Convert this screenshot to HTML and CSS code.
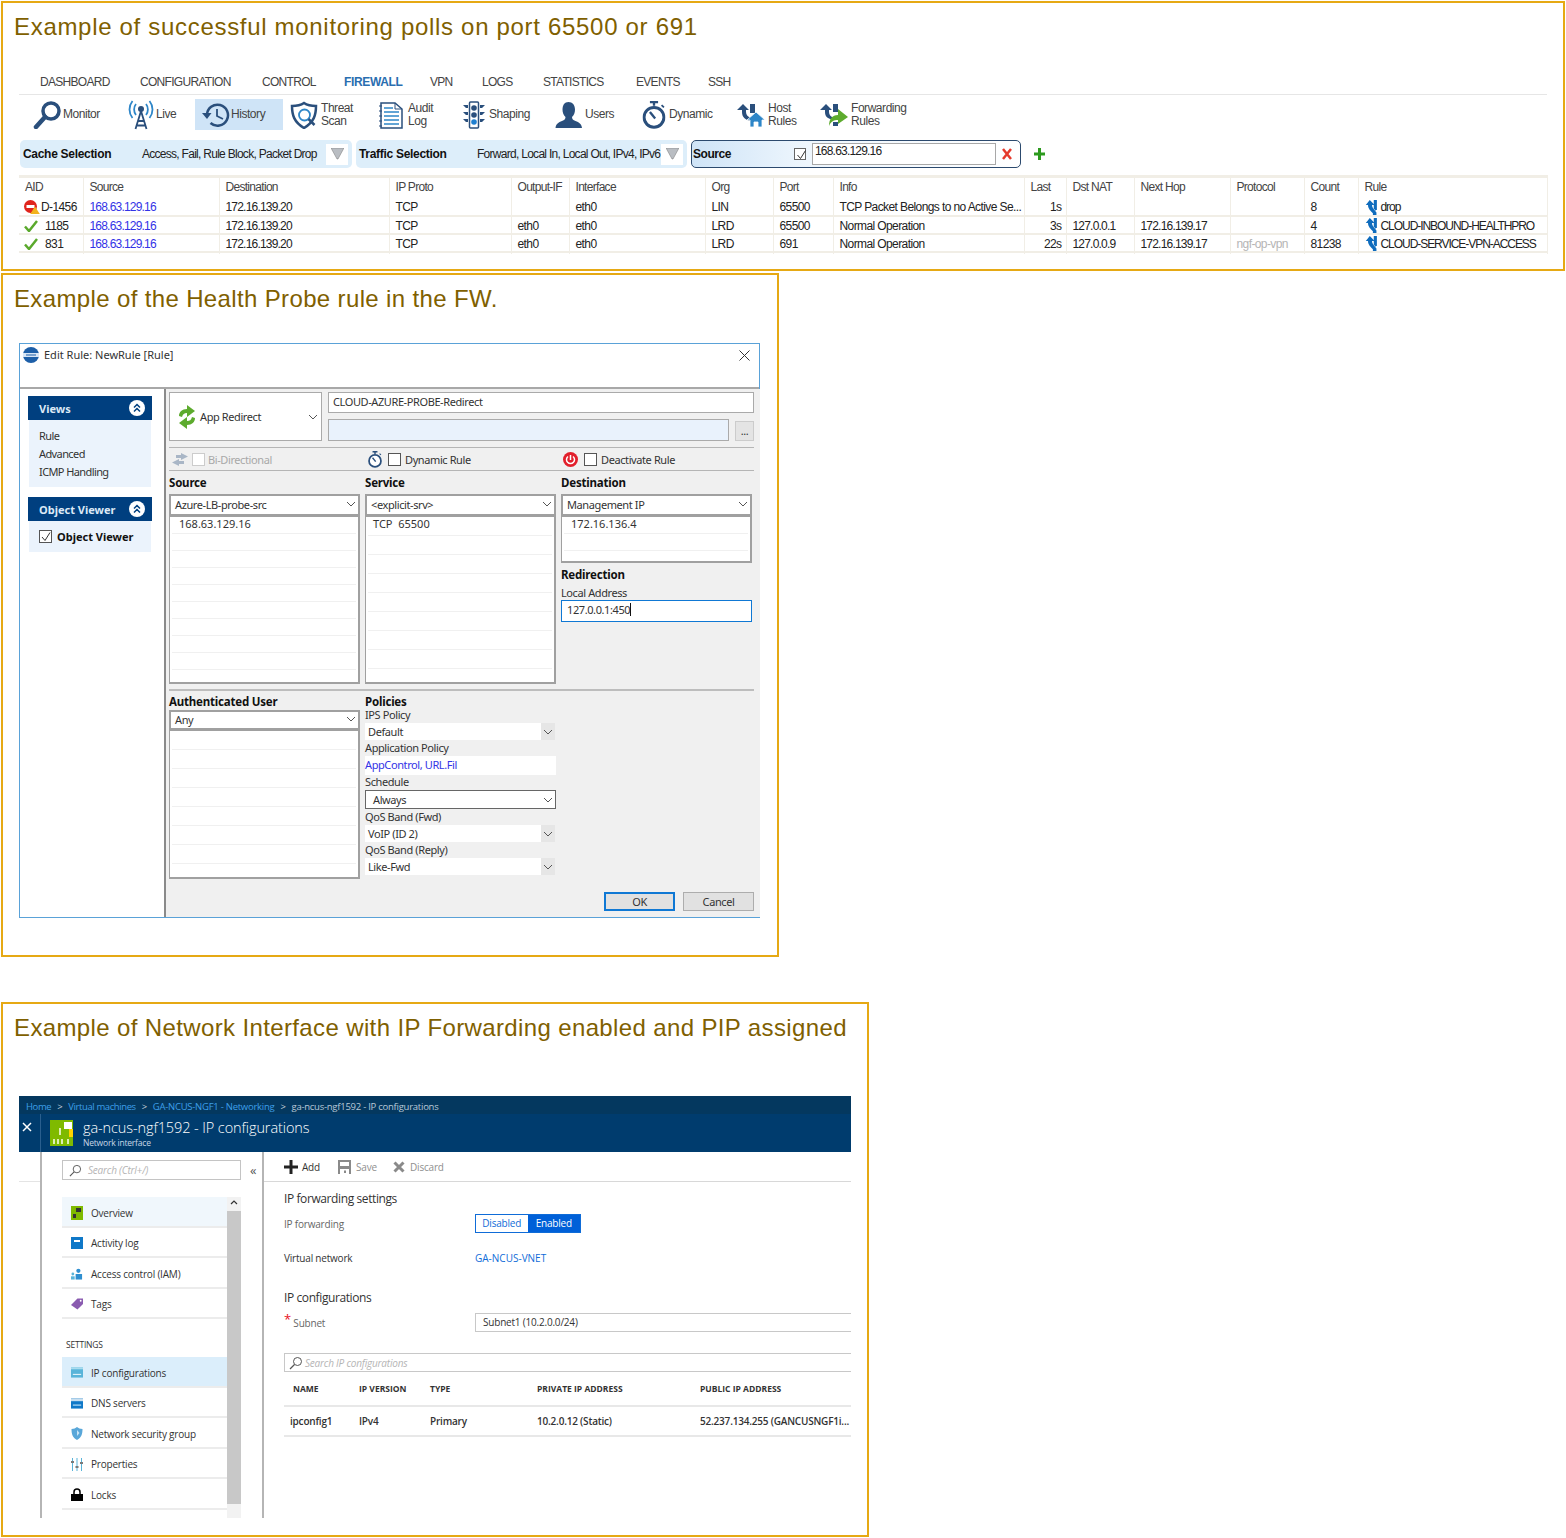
FILE: index.html
```html
<!DOCTYPE html>
<html>
  <head>
    <title>Monitoring examples</title>
    <link rel="stylesheet" href="styles.css">
  </head>
  <body>
    <svg class="defs" width="0" height="0">
      <symbol id="chev" viewBox="0 0 10 6"><path d="M1 1l4 4 4-4" fill="none" stroke="#555" stroke-width="1"/></symbol>
      <symbol id="branch" viewBox="0 0 14 18"><path d="M4.500 0L10 5.500H7C7 8 8.500 9.500 10 11.500L12 14v4H8v-3C6 12.500 2.500 10 2.500 5.500H0z" fill="#0f6cbd"/><path d="M9 0h3.500v10.500L11 12 9 9.500z" fill="#0f6cbd"/></symbol>
      <symbol id="check" viewBox="0 0 14 12"><path d="M1 6.500l4 4.500 8-10" fill="none" stroke="#5aa92c" stroke-width="2.500"/></symbol>
      <symbol id="watch" viewBox="0 0 20 24"><path d="M6.500 0h7v2h-2.500v2H9V2H6.500z" fill="#2a4f7c"/><path d="M16.500 3.500l2 2" stroke="#2a4f7c" stroke-width="1.500"/><circle cx="10" cy="14" r="8.500" fill="#fff" stroke="#2a4f7c" stroke-width="2.500"/><path d="M11 15L6.500 9.500" stroke="#2a4f7c" stroke-width="2"/></symbol>
      <symbol id="lens" viewBox="0 0 14 14"><circle cx="8.500" cy="5.500" r="4" fill="none" stroke="#555"/><path d="M5.500 8.500L1 13" stroke="#555" stroke-width="1.200"/></symbol>
      <symbol id="dbl" viewBox="0 0 16 16"><circle cx="8" cy="8" r="8" fill="#fff"/><path d="M5 7.500L8 4.500l3 3M5 11.500L8 8.500l3 3" fill="none" stroke="#003f7f" stroke-width="1.500"/></symbol>
      <symbol id="funnel" viewBox="0 0 13 12"><path d="M0 0h13L7 11H6z" fill="#b9bdc2" stroke="#777" stroke-width=".5"/></symbol>
    </svg>

    <section class="panel panel-fw">
      <h2>Example of successful monitoring polls on port 65500 or 691</h2>
      <div class="fw">
        <nav class="tabs">
          <span>DASHBOARD</span><span>CONFIGURATION</span><span>CONTROL</span><span class="tab-on">FIREWALL</span><span>VPN</span><span>LOGS</span><span>STATISTICS</span><span>EVENTS</span><span>SSH</span>
        </nav>
        <div class="tools">
          <div class="tool">
            <svg width="29" height="28" viewBox="0 0 29 28"><circle cx="18" cy="10" r="8" fill="#fff" stroke="#2a4f7c" stroke-width="3.500"/><path d="M12 16L3 26" stroke="#2a4f7c" stroke-width="4.500" stroke-linecap="round"/></svg>
            <span>Monitor</span>
          </div>
          <div class="tool">
            <svg width="28" height="30" viewBox="0 0 26 30"><g fill="none" stroke="#2e86c8" stroke-width="1.800"><path d="M8 4c-2.500 3-2.500 8 0 11M18 4c2.500 3 2.500 8 0 11M4.500 1c-4 5-4 12 0 17M21.500 1c4 5 4 12 0 17"/></g><g fill="none" stroke="#2a4f7c" stroke-width="1.800"><path d="M13 11L7.500 29M13 11l5.500 18M10 21h6M8.500 25.500h9"/></g><circle cx="13" cy="9" r="3" fill="#2a4f7c"/></svg>
            <span>Live</span>
          </div>
          <div class="tool tool-on">
            <svg width="28" height="26" viewBox="0 0 28 26"><path d="M5 13a10.500 10.500 0 1 1 3.500 8" fill="none" stroke="#2a4f7c" stroke-width="2.500"/><path d="M0 11h9.500L5 17z" fill="#2a4f7c"/><path d="M15 7v7l6 3" fill="none" stroke="#2a4f7c" stroke-width="1.800"/></svg>
            <span>History</span>
          </div>
          <div class="tool">
            <svg width="28" height="28" viewBox="0 0 28 28"><path d="M2 5c5 0 9-1 12-3 3 2 7 3 12 3 0 9-2 16-12 22C4 21 2 14 2 5z" fill="#fff" stroke="#2a4f7c" stroke-width="2.500"/><circle cx="14.500" cy="14" r="5.500" fill="#fff" stroke="#2e86c8" stroke-width="1.800"/><path d="M18.500 18l6 6" stroke="#2a4f7c" stroke-width="2.500"/></svg>
            <span class="two">Threat<br>Scan</span>
          </div>
          <div class="tool">
            <svg width="27" height="28" viewBox="0 0 27 28"><path d="M3 2h14l7 6v19H3z" fill="#fff" stroke="#2a4f7c" stroke-width="1.500"/><path d="M17 2v6h7" fill="none" stroke="#2a4f7c"/><path d="M6 7h9M6 11h15M6 15h15M6 19h15M6 23h15" stroke="#2e86c8" stroke-width="1.500"/><path d="M1 5h3M1 10h3M1 15h3M1 20h3M1 25h3" stroke="#2a4f7c"/></svg>
            <span class="two">Audit<br>Log</span>
          </div>
          <div class="tool">
            <svg width="28" height="28" viewBox="0 0 24 28"><rect x="7.500" y="1" width="9" height="26" rx="1" fill="#fff" stroke="#2a4f7c" stroke-width="1.500"/><circle cx="12" cy="7" r="2.800" fill="#2a4f7c"/><circle cx="12" cy="14" r="2.800" fill="#2a4f7c"/><circle cx="12" cy="21" r="2.800" fill="#1f7fd0"/><path d="M1 4h5v3H4zM1 11h5v3H4zM1 18h5v3H4zM18 4h5l-3 3h-2zM18 11h5l-3 3h-2zM18 18h5l-3 3h-2z" fill="#2a4f7c"/></svg>
            <span>Shaping</span>
          </div>
          <div class="tool">
            <svg width="31" height="26" viewBox="0 0 29 26"><path d="M14.500 0c4 0 6.500 3 6.500 7.500 0 3-1 5.500-3 7.500 0 2 1 3 3.500 4 3.500 1.500 6 2.500 6.500 7H1.500c.5-4.500 3-5.500 6.500-7 2.500-1 3.500-2 3.500-4-2-2-3-4.500-3-7.500C8.500 3 10.500 0 14.500 0z" fill="#2a4f7c"/></svg>
            <span>Users</span>
          </div>
          <div class="tool">
            <svg width="28" height="28" viewBox="0 0 20 24"><use href="#watch"/></svg>
            <span>Dynamic</span>
          </div>
          <div class="tool">
            <svg width="28" height="24" viewBox="0 0 28 24"><path d="M6 1l6 6H9v2c0 3 2 5 5 6v3c-6-1-9-4-9-9V7H0z" fill="#2a4f7c"/><path d="M13 1h5v9h-5z" fill="#2a4f7c"/><path d="M19 9l9 8h-3v7h-4v-5h-4v5h-4v-7h-3z" fill="#2e86c8" stroke="#fff" stroke-width=".8"/></svg>
            <span class="two">Host<br>Rules</span>
          </div>
          <div class="tool">
            <svg width="28" height="24" viewBox="0 0 28 24"><path d="M6 1l6 6H9v2c0 3 2 5 5 6v2c-6-1-9-3-9-8V7H0z" fill="#2a4f7c"/><path d="M13 1h5v8h-5zM13 19h5v4h-5z" fill="#2a4f7c"/><path d="M18 6l10 8-10 7v-4c-4 0-7 1-9 6 0-7 3-11 9-11z" fill="#5dab2e"/></svg>
            <span class="two">Forwarding<br>Rules</span>
          </div>
        </div>
        <div class="filters">
          <div class="filter">
            <b>Cache Selection</b>
            <span class="filter-val">Access, Fail, Rule Block, Packet Drop</span>
            <span class="funnel"><svg width="13" height="12"><use href="#funnel"/></svg></span>
          </div>
          <div class="filter filter-b">
            <b>Traffic Selection</b>
            <span class="filter-val">Forward, Local In, Local Out, IPv4, IPv6</span>
            <span class="funnel"><svg width="13" height="12"><use href="#funnel"/></svg></span>
          </div>
          <div class="filter-src">
            <b>Source</b>
            <span class="tick"><svg width="12" height="12" viewBox="0 0 12 12"><path d="M2.500 6l3 3.500 5-8" fill="none" stroke="#333"/></svg></span>
            <span class="src-input">168.63.129.16</span>
            <svg class="src-x" width="10" height="12" viewBox="0 0 10 12"><path d="M1 1l8 10M9 1L1 11" stroke="#e53a2c" stroke-width="2.500"/></svg>
          </div>
          <svg class="add-filter" width="11" height="12" viewBox="0 0 11 12"><path d="M4 0h3v4.500h4v3H7V12H4V7.500H0v-3h4z" fill="#2d9a1e"/></svg>
        </div>
        <table class="log">
          <colgroup><col class="c1"><col class="c2"><col class="c3"><col class="c4"><col class="c5"><col class="c6"><col class="c7"><col class="c8"><col class="c9"><col class="c10"><col class="c11"><col class="c12"><col class="c13"><col class="c14"><col class="c15"></colgroup>
          <thead>
            <tr><th>AID</th><th>Source</th><th>Destination</th><th>IP Proto</th><th>Output-IF</th><th>Interface</th><th>Org</th><th>Port</th><th>Info</th><th>Last</th><th>Dst NAT</th><th>Next Hop</th><th>Protocol</th><th>Count</th><th>Rule</th></tr>
          </thead>
          <tbody>
            <tr>
              <td class="aid"><svg width="16" height="14" viewBox="0 0 16 14"><circle cx="6.500" cy="6.500" r="6.500" fill="#e0241c"/><path d="M2.500 5h8v3h-8z" fill="#fff"/><path d="M11 6.500l4.800 7.500H6.200z" fill="#f2b21c"/></svg>D-1456</td>
              <td class="ip">168.63.129.16</td><td class="dig">172.16.139.20</td><td>TCP</td><td></td><td>eth0</td><td>LIN</td><td>65500</td><td>TCP Packet Belongs to no Active Se...</td><td class="num">1s</td><td></td><td></td><td></td><td>8</td>
              <td class="rule"><svg width="14" height="18"><use href="#branch"/></svg>drop</td>
            </tr>
            <tr>
              <td class="aid aid-ok"><svg width="14" height="12"><use href="#check"/></svg>1185</td>
              <td class="ip">168.63.129.16</td><td class="dig">172.16.139.20</td><td>TCP</td><td>eth0</td><td>eth0</td><td>LRD</td><td>65500</td><td>Normal Operation</td><td class="num">3s</td><td class="dig">127.0.0.1</td><td class="dig">172.16.139.17</td><td></td><td>4</td>
              <td class="rule"><svg width="14" height="18"><use href="#branch"/></svg>CLOUD-INBOUND-HEALTHPRO</td>
            </tr>
            <tr>
              <td class="aid aid-ok"><svg width="14" height="12"><use href="#check"/></svg>831</td>
              <td class="ip">168.63.129.16</td><td class="dig">172.16.139.20</td><td>TCP</td><td>eth0</td><td>eth0</td><td>LRD</td><td>691</td><td>Normal Operation</td><td class="num">22s</td><td class="dig">127.0.0.9</td><td class="dig">172.16.139.17</td><td class="muted">ngf-op-vpn</td><td>81238</td>
              <td class="rule"><svg width="14" height="18"><use href="#branch"/></svg>CLOUD-SERVICE-VPN-ACCESS</td>
            </tr>
            <tr class="log-end"><td></td><td></td><td></td><td></td><td></td><td></td><td></td><td></td><td></td><td></td><td></td><td></td><td></td><td></td><td></td></tr>
          </tbody>
        </table>
      </div>
    </section>

    <section class="panel panel-rule">
      <h2>Example of the Health Probe rule in the FW.</h2>
      <div class="dialog">
        <div class="dlg-title">
          <svg width="16" height="16" viewBox="0 0 16 16"><circle cx="8" cy="8" r="8" fill="#1d5fa8"/><path d="M0 6h16v4H0z" fill="#d8e6f5"/><path d="M3 7.500h10v1H3z" fill="#1d5fa8"/></svg>
          <span>Edit Rule: NewRule [Rule]</span>
          <svg class="dlg-close" width="11" height="11" viewBox="0 0 11 11"><path d="M.5.500l10 10M10.500.500l-10 10" stroke="#333"/></svg>
        </div>
        <div class="dlg-body">
          <aside class="dlg-side">
            <div class="side-head"><span>Views</span><svg width="16" height="16"><use href="#dbl"/></svg></div>
            <div class="side-body">
              <p>Rule</p>
              <p>Advanced</p>
              <p>ICMP Handling</p>
            </div>
            <div class="side-head side-gap"><span>Object Viewer</span><svg width="16" height="16"><use href="#dbl"/></svg></div>
            <div class="side-body side-ov">
              <span class="box box-on"><svg width="12" height="12" viewBox="0 0 12 12"><path d="M2 6l3 3.500 5-8" fill="none" stroke="#333"/></svg></span>
              <b>Object Viewer</b>
            </div>
          </aside>
          <div class="dlg-main">
            <div class="rule-top">
              <div class="action">
                <svg width="20" height="24" viewBox="0 0 20 24"><g fill="#5dab2e"><path d="M2 11c0-4 3-7 8-7V0l8 6-8 6V8c-3 0-4 1-5 4z"/><path d="M18 13c0 4-3 7-8 7v4l-8-6 8-6v4c3 0 4-1 5-4z"/></g></svg>
                <span>App Redirect</span>
                <svg class="sel-chev" width="10" height="6"><use href="#chev"/></svg>
              </div>
              <div class="rule-names">
                <div class="field">CLOUD-AZURE-PROBE-Redirect</div>
                <div class="desc-row"><div class="field field-blue"></div><div class="more">...</div></div>
              </div>
            </div>
            <div class="flags">
              <div class="flag flag-off">
                <svg width="18" height="13" viewBox="0 0 18 13"><path d="M10 0l7 3.500-7 3.500V5H5V2h5zM8 6v2h5v3H8v2L1 9.500z" fill="#a9b6c6"/></svg>
                <span class="box box-off"></span><span>Bi-Directional</span>
              </div>
              <div class="flag">
                <svg width="14" height="17" viewBox="0 0 20 24"><use href="#watch"/></svg>
                <span class="box"></span><span class="flag-text">Dynamic Rule</span>
              </div>
              <div class="flag">
                <svg width="15" height="15" viewBox="0 0 15 15"><circle cx="7.500" cy="7.500" r="7.500" fill="#e2202c"/><path d="M5 4.500a4 4 0 1 0 5 0M7.500 3v5" fill="none" stroke="#fff" stroke-width="1.500"/></svg>
                <span class="box"></span><span class="flag-text">Deactivate Rule</span>
              </div>
            </div>
            <div class="cols">
              <div>
                <h4>Source</h4>
                <div class="select">Azure-LB-probe-src<svg class="sel-chev" width="10" height="6"><use href="#chev"/></svg></div>
                <div class="list list-tall"><div class="li mono">168.63.129.16</div><div class="li"></div><div class="li"></div><div class="li"></div><div class="li"></div><div class="li"></div><div class="li"></div><div class="li"></div><div class="li"></div></div>
              </div>
              <div>
                <h4>Service</h4>
                <div class="select">&lt;explicit-srv&gt;<svg class="sel-chev" width="10" height="6"><use href="#chev"/></svg></div>
                <div class="list list-tall list-srv"><div class="li mono">TCP&nbsp; 65500</div><div class="li"></div><div class="li"></div><div class="li"></div><div class="li"></div><div class="li"></div><div class="li"></div><div class="li"></div></div>
              </div>
              <div>
                <h4>Destination</h4>
                <div class="select">Management IP<svg class="sel-chev" width="10" height="6"><use href="#chev"/></svg></div>
                <div class="list list-short"><div class="li mono">172.16.136.4</div><div class="li"></div><div class="li"></div></div>
                <h4 class="redir">Redirection</h4>
                <label class="small">Local Address</label>
                <div class="input-focus">127.0.0.1:450<i class="caret"></i></div>
              </div>
            </div>
            <div class="cols cols-low">
              <div>
                <h4>Authenticated User</h4>
                <div class="select select-low">Any<svg class="sel-chev" width="10" height="6"><use href="#chev"/></svg></div>
                <div class="list list-user"><div class="li"></div><div class="li"></div><div class="li"></div><div class="li"></div><div class="li"></div><div class="li"></div><div class="li"></div><div class="li"></div></div>
              </div>
              <div class="policies">
                <h4>Policies</h4>
                <label class="small">IPS Policy</label>
                <div class="pol-sel">Default<span class="pol-btn"><svg width="10" height="6"><use href="#chev"/></svg></span></div>
                <label class="small small-q">Application Policy</label>
                <div class="pol-link">AppControl, URL.Fil</div>
                <label class="small">Schedule</label>
                <div class="select select-sched">Always<svg class="sel-chev" width="10" height="6"><use href="#chev"/></svg></div>
                <label class="small small-q">QoS Band (Fwd)</label>
                <div class="pol-sel">VoIP (ID 2)<span class="pol-btn"><svg width="10" height="6"><use href="#chev"/></svg></span></div>
                <label class="small small-q">QoS Band (Reply)</label>
                <div class="pol-sel">Like-Fwd<span class="pol-btn"><svg width="10" height="6"><use href="#chev"/></svg></span></div>
              </div>
            </div>
            <div class="dlg-btns">
              <div class="btn btn-ok">OK</div>
              <div class="btn">Cancel</div>
            </div>
          </div>
        </div>
      </div>
    </section>

    <section class="panel panel-az">
      <h2>Example of Network Interface with IP Forwarding enabled and PIP assigned</h2>
      <div class="azure">
        <header class="az-head">
          <div class="crumbs">
            <a>Home</a><i>&gt;</i><a>Virtual machines</a><i>&gt;</i><a class="crumb-wide">GA-NCUS-NGF1 - Networking</a><i>&gt;</i><span class="crumb-wide">ga-ncus-ngf1592 - IP configurations</span>
          </div>
          <div class="az-title">
            <div class="az-x"><svg width="10" height="10" viewBox="0 0 10 10"><path d="M1 1l8 8M9 1L1 9" stroke="#fff" stroke-width="1.500"/></svg></div>
            <svg class="az-nic" width="23" height="26" viewBox="0 0 23 26"><path d="M0 0h23v26H0z" fill="#7fba00"/><path d="M14 2h8v7h-8z" fill="#fff"/><path d="M3 19h2v5H3zM7 19h2v5H7zM11 19h2v5h-2zM17 19h2v5h-2z" fill="#dfeeb5"/><path d="M9 8h2v7H9z" fill="#dfeeb5"/><path d="M19 9h4v8h-4z" fill="#ffd400"/></svg>
            <div>
              <div class="az-name">ga-ncus-ngf1592 - IP configurations</div>
              <div class="az-sub">Network interface</div>
            </div>
          </div>
        </header>
        <div class="az-body">
          <div class="az-gutter"><div class="gutter-top"></div></div>
          <div class="az-menu">
            <div class="menu-top">
              <div class="az-search"><svg width="13" height="13"><use href="#lens"/></svg><em>Search (Ctrl+/)</em></div>
              <span class="fold">&laquo;</span>
            </div>
            <div class="menu-wrap">
              <ul class="menu">
                <li class="menu-soft"><svg width="12" height="14" viewBox="0 0 12 14"><path d="M0 0h12v14H0z" fill="#7fba00"/><path d="M5 2h5v4H5zM2 8h3v4H2z" fill="#333"/></svg>Overview</li>
                <li><svg width="12" height="12" viewBox="0 0 12 12"><path d="M0 0h12v12H0z" fill="#0f78c8"/><path d="M3 3h6v2H3z" fill="#fff"/></svg>Activity log</li>
                <li><svg width="13" height="12" viewBox="0 0 13 12"><circle cx="8" cy="2.500" r="2.300" fill="#2f8fd0"/><path d="M5 6h7v6H5z" fill="#2f8fd0"/><circle cx="2" cy="6" r="1.500" fill="#59b4d9"/><path d="M0 8.500h4V12H0z" fill="#59b4d9"/></svg>Access control (IAM)</li>
                <li><svg width="13" height="12" viewBox="0 0 13 12"><path d="M7 0h6v6l-6 6-7-5z" fill="#8a5bb0"/><circle cx="10.500" cy="2.500" r="1" fill="#fff"/></svg>Tags</li>
                <li class="menu-label">SETTINGS</li>
                <li class="menu-on"><svg width="13" height="11" viewBox="0 0 13 11"><path d="M0 0h13v11H0z" fill="#59b4d9"/><path d="M0 0h13v2H0z" fill="#a8dcef"/><path d="M2 7h9v1H2z" fill="#fff"/></svg>IP configurations</li>
                <li><svg width="13" height="11" viewBox="0 0 13 11"><path d="M0 0h13v11H0z" fill="#0f78c8"/><path d="M0 0h13v3H0z" fill="#c8dff0"/><path d="M2 6.500h9v1.500H2z" fill="#9fd0f2"/></svg>DNS servers</li>
                <li><svg width="11" height="13" viewBox="0 0 11 13"><path d="M0 2c2.500 0 4-1 5.500-2C7 1 8.500 2 11 2c0 5-1 8.500-5.500 11C1 10.500 0 7 0 2z" fill="#59a7d9"/><path d="M5.500 3L8 6 5.500 9z" fill="#c8e4f5"/></svg>Network security group</li>
                <li><svg width="12" height="13" viewBox="0 0 12 13"><path d="M1 0h1v13H1zM5.500 0h1v13h-1zM10 0h1v13h-1z" fill="#59b4d9"/><path d="M0 3h3v2H0zM4.500 8h3v2h-3zM9 4h3v2H9z" fill="#7a7a7a"/></svg>Properties</li>
                <li><svg width="12" height="13" viewBox="0 0 12 13"><path d="M3 6V4a3 3 0 0 1 6 0v2" fill="none" stroke="#000" stroke-width="1.500"/><path d="M0 6h12v7H0z" fill="#000"/></svg>Locks</li>
              </ul>
              <div class="scroll"><span class="scroll-up"><svg width="8" height="5" viewBox="0 0 8 5"><path d="M1 4l3-3 3 3" fill="none" stroke="#333" stroke-width="1.200"/></svg></span><span class="scroll-thumb"></span></div>
            </div>
          </div>
          <div class="az-blade">
            <div class="blade-bar">
              <span class="bar-act"><svg width="14" height="14" viewBox="0 0 14 14"><path d="M5.500 0h3v5.500H14v3H8.500V14h-3V8.500H0v-3h5.500z" fill="#222"/></svg>Add</span>
              <span class="bar-act bar-off"><svg width="13" height="14" viewBox="0 0 13 14"><path d="M0 0h13v14H0z" fill="#8a8a8a"/><path d="M2 2h9v4H2zM2 9h9v5H2z" fill="#fff"/><path d="M6 10.500h2V13H6z" fill="#8a8a8a"/></svg>Save</span>
              <span class="bar-act bar-off"><svg width="12" height="12" viewBox="0 0 12 12"><path d="M1.500 1.500l9 9M10.500 1.500l-9 9" stroke="#8a8a8a" stroke-width="3"/></svg>Discard</span>
            </div>
            <div class="blade-body">
              <h5 class="blade-h">IP forwarding settings</h5>
              <div class="form-row form-first">
                <label>IP forwarding</label>
                <div class="toggle"><span>Disabled</span><span class="toggle-on">Enabled</span></div>
              </div>
              <div class="form-row form-vnet">
                <label class="label-dark">Virtual network</label>
                <a class="az-link">GA-NCUS-VNET</a>
              </div>
              <h5 class="blade-h blade-h2">IP configurations</h5>
              <div class="form-row form-subnet">
                <label><i class="req">*</i> Subnet</label>
                <div class="az-input">Subnet1 (10.2.0.0/24)</div>
              </div>
              <div class="az-filter"><svg width="14" height="14"><use href="#lens"/></svg><em>Search IP configurations</em></div>
              <table class="ipconf">
                <colgroup><col class="k1"><col class="k2"><col class="k3"><col class="k4"><col class="k5"></colgroup>
                <thead><tr><th>NAME</th><th>IP VERSION</th><th>TYPE</th><th>PRIVATE IP ADDRESS</th><th>PUBLIC IP ADDRESS</th></tr></thead>
                <tbody><tr><td>ipconfig1</td><td>IPv4</td><td>Primary</td><td>10.2.0.12 (Static)</td><td>52.237.134.255 (GANCUSNGF1i...</td></tr></tbody>
              </table>
            </div>
          </div>
        </div>
      </div>
    </section>
  </body>
</html>
```

FILE: styles.css
```css
* {
  box-sizing: border-box;
}
body {
  margin: 0;
  padding: 1px;
  background: #fff;
  font-family: "Liberation Sans", sans-serif;
  color: #222;
}
.defs {
  display: block;
  height: 0;
}
p, h2, h4, h5, ul {
  margin: 0;
  padding: 0;
}
.panel {
  border: 2px solid #e6a914;
  overflow: hidden;
}
.panel-fw {
  width: 1564px;
  height: 270px;
}
.panel-rule {
  width: 778px;
  height: 684px;
  margin-top: 2px;
}
.panel-az {
  width: 868px;
  height: 535px;
  margin-top: 45px;
}
h2 {
  margin: 9px 0 0 11px;
  height: 30px;
  line-height: 30px;
  font-size: 24px;
  font-weight: 400;
  color: #7f6000;
  letter-spacing: 0.69px;
  white-space: nowrap;
}
.panel-rule h2 {
  letter-spacing: 0.36px;
}
.panel-az h2 {
  letter-spacing: 0.37px;
}

/* firewall monitor */
.fw {
  margin: 28px 0 0 16px;
  width: 1528px;
  font-size: 12px;
  letter-spacing: -0.45px;
}
.tabs {
  display: grid;
  grid-template-columns: 100px 122px 82px 86px 52px 61px 93px 72px auto;
  height: 25px;
  padding: 6px 0 0 21px;
  border-bottom: 1px solid #e6e6e6;
  color: #444;
  line-height: 13px;
  letter-spacing: -0.7px;
}
.tab-on {
  color: #2a6eb0;
  font-weight: 700;
  letter-spacing: -0.35px;
}
.tools {
  display: grid;
  grid-template-columns: 94px 68px 95px 88px 82px 93px 87px 97px 83px auto;
  height: 31px;
  margin-top: 4px;
  padding-left: 14px;
}
.tool {
  display: flex;
  align-items: center;
  gap: 1px;
  color: #444;
  line-height: 13px;
}
.tool svg {
  flex: none;
}
.tool-on {
  background: #cfe4f7;
  margin-right: 7px;
  padding-left: 7px;
}
.two {
  margin-left: 2px;
}
.filters {
  display: flex;
  align-items: center;
  height: 28px;
  margin: 10px 0 0 1px;
  gap: 4px;
}
.filter {
  position: relative;
  display: flex;
  align-items: center;
  width: 332px;
  height: 28px;
  padding-left: 3px;
  background: #ddeefa;
  border-radius: 5px;
}
.filter-b {
  width: 331px;
}
.filter b {
  width: 119px;
  letter-spacing: -0.3px;
  color: #111;
}
.filter-b b {
  width: 118px;
}
.filter-val {
  white-space: nowrap;
  letter-spacing: -0.72px;
}
.funnel {
  position: absolute;
  right: 4px;
  top: 4px;
  width: 22px;
  height: 21px;
  padding-top: 4px;
  background: #fff;
  text-align: center;
  line-height: 0;
}
.filter-src {
  display: flex;
  align-items: center;
  flex: none;
  width: 330px;
  height: 28px;
  padding-left: 1px;
  border: 1px solid #2c4a6e;
  border-radius: 5px;
  background: linear-gradient(90deg, #cfe4f7, #eef6fd 35%, #fff);
}
.filter-src b {
  width: 101px;
  color: #111;
}
.tick {
  width: 12px;
  height: 12px;
  border: 1px solid #666;
  background: #fff;
  display: block;
  line-height: 0;
}
.src-input {
  width: 184px;
  height: 22px;
  margin-left: 6px;
  padding: 1px 2px;
  background: #fff;
  border: 1px solid #a8a8a8;
  line-height: 13px;
  letter-spacing: -0.8px;
}
.src-x {
  margin-left: 6px;
}
.add-filter {
  margin-left: 9px;
}
.log {
  width: 100%;
  margin-top: 7px;
  table-layout: fixed;
  border-collapse: collapse;
  border-top: 3px solid #f1eee6;
  white-space: nowrap;
}
.c1 { width: 64px; }
.c2 { width: 136px; }
.c3 { width: 170px; }
.c4 { width: 122px; }
.c5 { width: 58px; }
.c6 { width: 136px; }
.c7 { width: 68px; }
.c8 { width: 60px; }
.c9 { width: 191px; }
.c10 { width: 42px; }
.c11 { width: 68px; }
.c12 { width: 96px; }
.c13 { width: 74px; }
.c14 { width: 54px; }
.c15 { width: 189px; }
.log th {
  height: 21px;
  padding: 0 0 2px 6px;
  font-weight: 400;
  text-align: left;
  color: #444;
  border-right: 1px solid #f1eee6;
  letter-spacing: -0.7px;
}
.log td {
  height: 18px;
  padding: 2px 0 0 6px;
  border-right: 1px solid #f1eee6;
  border-bottom: 2px solid #f1eee6;
  overflow: hidden;
  line-height: 14px;
  letter-spacing: -0.6px;
}
.log tbody tr:nth-child(2) td {
  height: 17px;
}
.log td.ip, .log td.dig {
  letter-spacing: -0.8px;
}
.log td.ip {
  color: #3333e6;
}
.log td.num {
  text-align: right;
  padding-right: 4px;
}
.log td.muted {
  color: #b5b5b5;
}
.log td.aid {
  padding-left: 5px;
}
.aid svg {
  margin-right: 1px;
  vertical-align: -3px;
}
.log td.aid-ok svg {
  margin-right: 7px;
  vertical-align: -2px;
}
.log td.rule svg {
  width: 14px;
  height: 16px;
  margin: -3px 2px -3px 0;
  vertical-align: middle;
}
.log td.rule {
  letter-spacing: -1.05px;
}
.log .log-end td {
  height: 2px;
  padding: 0;
  line-height: 0;
  border-bottom: 0;
}

/* edit rule dialog */
.dialog {
  width: 741px;
  height: 575px;
  margin: 29px 0 0 16px;
  border: 1px solid #5aa2d8;
  background: #fff;
  font-family: "Noto Sans", sans-serif;
  font-size: 11px;
  letter-spacing: -0.4px;
  color: #333;
}
.dlg-title {
  display: flex;
  gap: 5px;
  height: 45px;
  padding: 3px 9px 0 3px;
  border-bottom: 2px solid #a8a8a8;
  line-height: 16px;
  letter-spacing: 0;
}
.dlg-close {
  margin: 3px 0 0 auto;
}
.dlg-body {
  display: flex;
  height: 528px;
}
.dlg-side {
  flex: none;
  width: 146px;
  padding: 7px 0 0 8px;
  border-right: 2px solid #8a8a8a;
}
.side-head {
  display: flex;
  justify-content: space-between;
  align-items: center;
  width: 124px;
  height: 24px;
  padding: 0 7px 0 11px;
  background: #003f7f;
  color: #dce9f6;
  font-weight: 700;
  letter-spacing: 0;
}
.side-gap {
  margin-top: 10px;
}
.side-body {
  width: 122px;
  height: 67px;
  margin-left: 1px;
  padding: 7px 0 0 10px;
  background: #ebf3fc;
  line-height: 18px;
  letter-spacing: -0.6px;
}
.side-ov {
  display: flex;
  align-items: center;
  gap: 5px;
  height: 31px;
  padding: 0 0 0 10px;
  color: #111;
  letter-spacing: 0;
}
.box {
  display: block;
  flex: none;
  width: 13px;
  height: 13px;
  border: 1px solid #555;
  background: #fff;
  line-height: 0;
}
.box-off {
  border-color: #ccc;
}
.dlg-main {
  flex: 1;
  padding: 3px 6px 0 3px;
  background: #f0f0f0;
}
.rule-top {
  display: grid;
  grid-template-columns: 153px 1fr;
  gap: 6px;
  height: 49px;
}
.action {
  display: flex;
  align-items: center;
  gap: 3px;
  padding: 0 3px 0 7px;
  background: #fff;
  border: 1px solid #aaa;
}
.sel-chev {
  margin-left: auto;
  flex: none;
}
.rule-names {
  display: flex;
  flex-direction: column;
  gap: 6px;
}
.field {
  height: 21px;
  padding: 0 4px;
  background: #fff;
  border: 1px solid #aaa;
  line-height: 18px;
}
.desc-row {
  display: flex;
  gap: 6px;
  height: 22px;
}
.field-blue {
  width: 401px;
  height: 22px;
  background: #e9f2fc;
}
.more {
  width: 19px;
  height: 20px;
  margin-top: 2px;
  border: 1px solid #ccc;
  background: #e4e4e4;
  text-align: center;
  line-height: 18px;
}
.flags {
  display: grid;
  grid-template-columns: 196px 195px 1fr;
  height: 24px;
  margin-top: 6px;
  border-top: 1px solid #b5b5b5;
  border-bottom: 1px solid #b5b5b5;
}
.flag {
  display: flex;
  align-items: center;
  gap: 6px;
  padding-left: 3px;
}
.flag-text {
  margin-left: -2px;
}
.flag-off {
  gap: 3px;
  padding-left: 2px;
  color: #a8a8a8;
}
.cols {
  display: grid;
  grid-template-columns: 191px 191px 191px;
  gap: 5px;
  margin-top: 5px;
}
h4 {
  height: 18px;
  font-size: 11.500px;
  line-height: 13px;
  color: #111;
  letter-spacing: -0.2px;
}
.select {
  display: flex;
  align-items: center;
  height: 21px;
  padding: 0 2px 2px 4px;
  background: #fff;
  border: 2px solid #a0a0a0;
  border-bottom-width: 1px;
}
.list {
  background: #fff;
  border: 1px solid #a0a0a0;
  border-width: 2px 2px 2px 1px;
  overflow: hidden;
}
.list-tall {
  height: 169px;
}
.list-short {
  height: 48px;
}
.li {
  height: 17px;
  margin: 0 2px;
  padding-left: 7px;
  border-bottom: 1px solid #f0f0f0;
  line-height: 14px;
}
.list-srv .li {
  height: 19px;
  padding-left: 5px;
}
.mono {
  letter-spacing: 0;
}
.redir {
  height: 16px;
  margin-top: 5px;
}
.small {
  display: block;
  height: 16px;
  line-height: 17px;
}
.input-focus {
  height: 22px;
  padding-left: 5px;
  background: #fff;
  border: 1px solid #0f78d4;
  line-height: 18px;
}
.caret {
  display: inline-block;
  width: 1px;
  height: 13px;
  background: #111;
  vertical-align: -2px;
}
.cols-low {
  height: 190px;
  margin-top: 5px;
  padding-top: 1px;
  border-top: 2px solid #bdbdbd;
  grid-template-columns: 191px 191px;
}
.cols-low h4 {
  line-height: 19px;
}
.select-low {
  height: 19px;
}
.list-user {
  height: 150px;
}
.list-user .li {
  height: 19px;
}
.policies h4 {
  height: 16px;
}
.policies .small {
  height: 15px;
  line-height: 14px;
}
.policies .small-q {
  height: 16px;
  line-height: 15px;
}
.pol-sel {
  display: flex;
  align-items: center;
  justify-content: space-between;
  width: 190px;
  height: 17px;
  padding-left: 3px;
  background: #fff;
}
.pol-btn {
  display: flex;
  align-items: center;
  justify-content: center;
  width: 14px;
  height: 17px;
  background: #e6e6e6;
}
.pol-link {
  height: 19px;
  color: #3333e6;
  background: #fff;
  line-height: 18px;
}
.select-sched {
  height: 19px;
  padding: 0 2px 0 7px;
  border-width: 1px;
  border-color: #666;
}
.dlg-btns {
  display: flex;
  justify-content: flex-end;
  gap: 8px;
  margin-top: 13px;
}
.btn {
  width: 71px;
  height: 19px;
  background: #e1e1e1;
  border: 1px solid #adadad;
  text-align: center;
  line-height: 17px;
}
.btn-ok {
  border: 2px solid #0f78d4;
  line-height: 15px;
}

/* azure blade */
.azure {
  width: 832px;
  height: 422px;
  margin: 53px 0 0 16px;
  font-family: "Open Sans", sans-serif;
  font-size: 10px;
  letter-spacing: -0.2px;
  color: #333;
}
.az-head {
  height: 56px;
  background: #003c6e;
  color: #fff;
}
.crumbs {
  display: flex;
  gap: 6px;
  height: 18px;
  padding-left: 7px;
  background: #04385f;
  color: #b8c8d8;
  font-size: 9.500px;
  line-height: 21px;
  letter-spacing: -0.4px;
}
.crumbs a {
  color: #3d9fe8;
}
.crumbs .crumb-wide {
  letter-spacing: -0.25px;
}
.crumbs i {
  font-style: normal;
  color: #c8d4de;
}
.az-title {
  display: flex;
  height: 38px;
}
.az-x {
  width: 22px;
  padding: 8px 0 0 3px;
  border-right: 1px solid #2a5f8e;
  line-height: 0;
}
.az-nic {
  margin: 6px 10px 0 9px;
}
.az-name {
  margin-top: 5px;
  height: 18px;
  font-size: 14.500px;
  font-weight: 300;
  line-height: 18px;
  letter-spacing: -0.1px;
  white-space: nowrap;
}
.az-sub {
  font-size: 8.500px;
  line-height: 12px;
  color: #c8d8e6;
}
.az-body {
  display: flex;
  height: 366px;
}
.az-gutter {
  width: 23px;
  border-right: 2px solid #b5b5b5;
}
.gutter-top {
  height: 30px;
  border-bottom: 1px solid #e4e4e4;
}
.az-menu {
  width: 222px;
  padding-left: 20px;
  border-right: 2px solid #b5b5b5;
}
.menu-top {
  display: flex;
  align-items: center;
  margin-top: 8px;
}
.az-search {
  display: flex;
  align-items: center;
  gap: 6px;
  width: 179px;
  height: 20px;
  padding-left: 6px;
  border: 1px solid #c4c4c4;
}
em {
  color: #b5b5b5;
  white-space: nowrap;
}
.fold {
  margin-left: 9px;
  font-size: 13px;
  color: #555;
}
.menu-wrap {
  display: flex;
  height: 321px;
  margin-top: 17px;
}
.menu {
  width: 165px;
  list-style: none;
}
.menu li {
  display: flex;
  align-items: center;
  height: 30.500px;
  padding: 3px 0 0 9px;
  border-bottom: 2px solid #ececec;
}
.menu li svg {
  flex: none;
  width: 12px;
  margin-right: 8px;
}
.menu li.menu-label {
  height: 38px;
  padding: 12px 0 0 4px;
  border: 0;
  font-size: 8.500px;
}
.menu-soft {
  background: #f0f7fc;
}
.menu-on {
  background: #dbeefb;
}
.scroll {
  display: flex;
  flex-direction: column;
  width: 14px;
  background: #f2f2f2;
}
.scroll-up {
  display: block;
  height: 14px;
  padding: 3px 0 0 3px;
  line-height: 0;
}
.scroll-thumb {
  display: block;
  height: 293px;
  background: #c8c8c8;
}
.az-blade {
  flex: 1;
}
.blade-bar {
  display: flex;
  height: 30px;
  padding-left: 20px;
  border-bottom: 1px solid #d8d8d8;
}
.bar-act {
  display: flex;
  align-items: center;
  width: 54px;
  gap: 4px;
  color: #333;
}
.bar-act + .bar-act {
  width: 55px;
  gap: 5px;
}
.bar-off {
  color: #8f8f8f;
}
.blade-body {
  padding-left: 20px;
}
.blade-h {
  height: 18px;
  margin-top: 8px;
  font-size: 12px;
  font-weight: 400;
  line-height: 18px;
  letter-spacing: -0.4px;
}
.blade-h2 {
  margin-top: 22px;
}
.form-row {
  display: grid;
  grid-template-columns: 191px 1fr;
  align-items: center;
}
.form-row label {
  color: #666;
}
.form-row .label-dark {
  color: #333;
}
.form-first {
  height: 19px;
  margin-top: 6px;
}
.form-vnet {
  height: 19px;
  margin-top: 15px;
}
.form-subnet {
  height: 19px;
  margin-top: 6px;
}
.toggle {
  display: flex;
  width: 106px;
  height: 19px;
  border: 1px solid #0f6cd8;
  color: #0f6cd8;
  line-height: 17px;
  text-align: center;
}
.toggle span {
  width: 52px;
}
.toggle .toggle-on {
  width: 53px;
  background: #0060d8;
  color: #fff;
}
.az-link {
  color: #0f6cd8;
  letter-spacing: 0;
}
.req {
  position: relative;
  top: -3px;
  color: #e81123;
  font-style: normal;
  font-size: 13px;
  line-height: 0;
}
.az-input {
  height: 19px;
  padding-left: 7px;
  border: 1px solid #c8c8c8;
  border-right: 0;
  line-height: 17px;
}
.az-filter {
  display: flex;
  align-items: center;
  gap: 2px;
  height: 19px;
  margin-top: 21px;
  padding-left: 4px;
  border: 1px solid #c8c8c8;
  border-right: 0;
}
.ipconf {
  width: 567px;
  table-layout: fixed;
  border-collapse: collapse;
  white-space: nowrap;
}
.k1 { width: 75px; }
.k2 { width: 71px; }
.k3 { width: 107px; }
.k4 { width: 163px; }
.k5 { width: 151px; }
.ipconf th {
  height: 34px;
  padding: 0;
  border-bottom: 2px solid #e8e8e8;
  text-align: left;
  font-size: 8.500px;
  letter-spacing: 0;
}
.ipconf td {
  height: 30px;
  padding: 0;
  border-bottom: 2px solid #e8e8e8;
  overflow: hidden;
  font-size: 10px;
  font-weight: 600;
}
.ipconf th:first-child {
  padding-left: 9px;
}
.ipconf td:first-child {
  padding-left: 6px;
}
```
